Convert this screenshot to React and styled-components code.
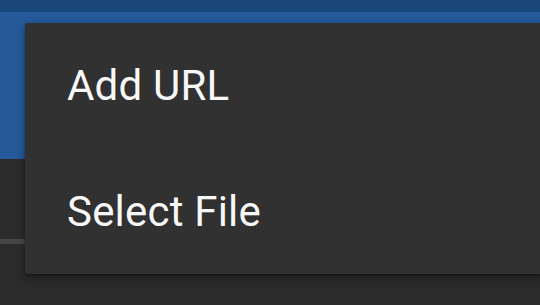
import React from "react";
import styled, { createGlobalStyle } from "styled-components";

const GlobalStyle = createGlobalStyle`
  html, body {
    margin: 0;
    padding: 0;
    background: #2b2b2b;
  }
  body {
    font-family: Roboto, "Liberation Sans", sans-serif;
  }
`;

const Screen = styled.div`
  position: relative;
  width: 540px;
  height: 305px;
  overflow: hidden;
  display: flex;
  flex-direction: column;
  background: #2b2b2b;
`;

const StatusBar = styled.div`
  height: 12px;
  background: #1a477a;
`;

const AppBar = styled.header`
  height: 147px;
  background: #245a99;
`;

const Content = styled.main`
  flex: 1;
  display: flex;
  flex-direction: column;
  padding-top: 80px;
`;

const Divider = styled.div`
  height: 5px;
  background: #464646;
`;

const Menu = styled.ul`
  position: absolute;
  top: 23px;
  left: 25px;
  right: -6px;
  margin: 0;
  padding: 0;
  list-style: none;
  background: #313131;
  border-radius: 3px;
  box-shadow: 0 4px 8px rgba(0, 0, 0, 0.35), 0 1px 3px rgba(0, 0, 0, 0.3);
`;

const MenuItem = styled.li`
  height: 125.5px;
  display: flex;
  align-items: center;
  padding: 0 0 0 42px;
  font-size: 42px;
  color: #f7f7f7;
  letter-spacing: 0.2px;
`;

const items = ["Add URL", "Select File"];

export default function App() {
  return (
    <>
      <GlobalStyle />
      <Screen>
        <StatusBar />
        <AppBar />
        <Content>
          <Divider />
        </Content>
        <Menu>
          {items.map((label) => (
            <MenuItem key={label}>{label}</MenuItem>
          ))}
        </Menu>
      </Screen>
    </>
  );
}
